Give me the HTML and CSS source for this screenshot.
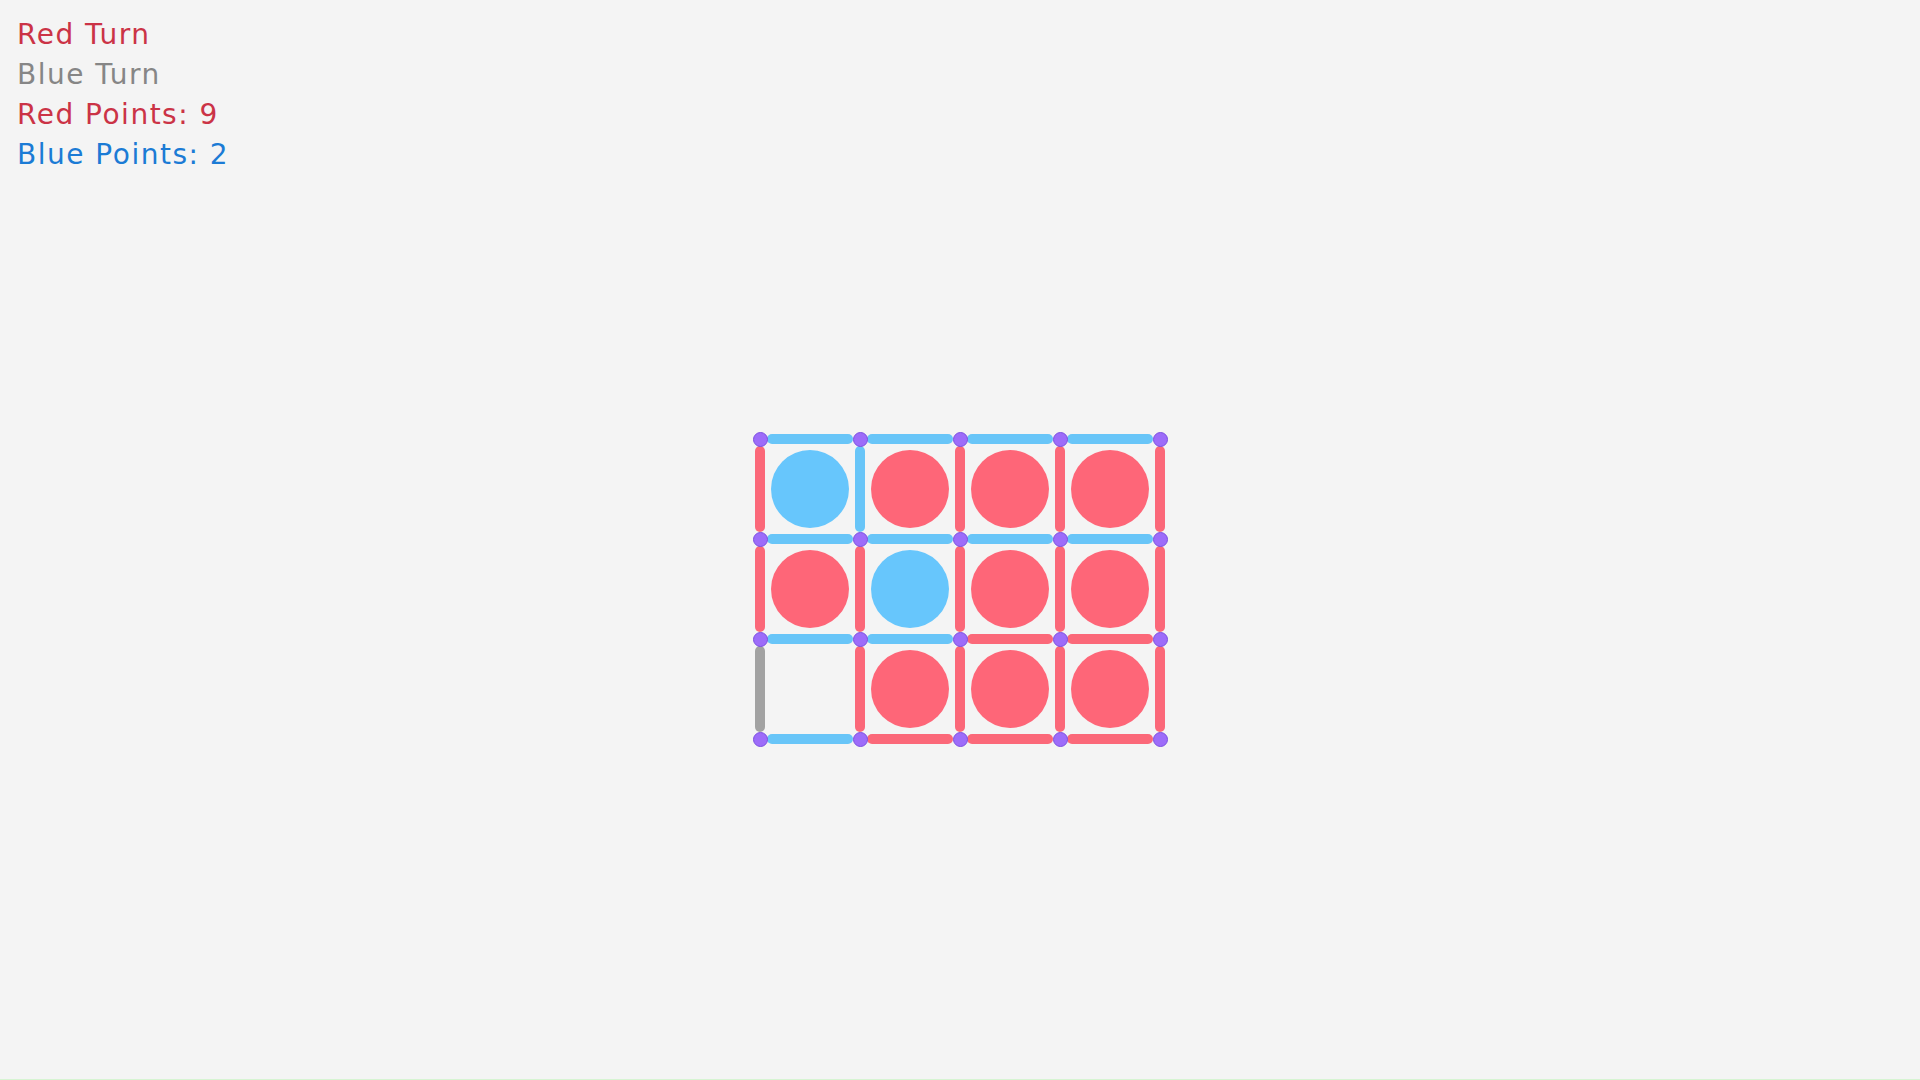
FILE: index.html
```html
<!DOCTYPE html>
<html lang="en">
<head>
    <meta charset="UTF-8">
    <meta name="viewport" content="width=device-width, initial-scale=1.0">
    <title>Dots and Boxes</title>
    <link rel="stylesheet" href="styles.css">
</head>
<body>
    <div class="page">
        <!-- Marcador -->
        <div class="hud">
            <div class="hud-line red-text">Red Turn</div>
            <div class="hud-line idle-text">Blue Turn</div>
            <div class="hud-line red-text">Red Points: 9</div>
            <div class="hud-line blue-text">Blue Points: 2</div>
        </div>

        <!-- Tablero -->
        <div class="stage">
            <div class="board">
                <!-- fila de puntos 0 -->
                <span class="dot"></span><span class="hline blue"></span><span class="dot"></span><span class="hline blue"></span><span class="dot"></span><span class="hline blue"></span><span class="dot"></span><span class="hline blue"></span><span class="dot"></span>
                <!-- fila de cajas 0 -->
                <span class="vline red"></span><span class="box"><i class="coin blue"></i></span><span class="vline blue"></span><span class="box"><i class="coin red"></i></span><span class="vline red"></span><span class="box"><i class="coin red"></i></span><span class="vline red"></span><span class="box"><i class="coin red"></i></span><span class="vline red"></span>
                <!-- fila de puntos 1 -->
                <span class="dot"></span><span class="hline blue"></span><span class="dot"></span><span class="hline blue"></span><span class="dot"></span><span class="hline blue"></span><span class="dot"></span><span class="hline blue"></span><span class="dot"></span>
                <!-- fila de cajas 1 -->
                <span class="vline red"></span><span class="box"><i class="coin red"></i></span><span class="vline red"></span><span class="box"><i class="coin blue"></i></span><span class="vline red"></span><span class="box"><i class="coin red"></i></span><span class="vline red"></span><span class="box"><i class="coin red"></i></span><span class="vline red"></span>
                <!-- fila de puntos 2 -->
                <span class="dot"></span><span class="hline blue"></span><span class="dot"></span><span class="hline blue"></span><span class="dot"></span><span class="hline red"></span><span class="dot"></span><span class="hline red"></span><span class="dot"></span>
                <!-- fila de cajas 2 -->
                <span class="vline empty"></span><span class="box"></span><span class="vline red"></span><span class="box"><i class="coin red"></i></span><span class="vline red"></span><span class="box"><i class="coin red"></i></span><span class="vline red"></span><span class="box"><i class="coin red"></i></span><span class="vline red"></span>
                <!-- fila de puntos 3 -->
                <span class="dot"></span><span class="hline blue"></span><span class="dot"></span><span class="hline red"></span><span class="dot"></span><span class="hline red"></span><span class="dot"></span><span class="hline red"></span><span class="dot"></span>
            </div>
        </div>
    </div>
</body>
</html>
```

FILE: styles.css
```css
body {
    margin: 0;
    padding: 0;
    background-color: #f4f4f4;
    font-family: "DejaVu Sans", Verdana, sans-serif;
}
.page {
    min-height: 100vh;
    box-sizing: border-box;
    border-bottom: 1px solid #d6f4d2;
    display: flex;
    flex-direction: column;
}
.hud {
    padding: 15px 0 0 17px;
}
.hud-line {
    font-size: 28px;
    line-height: 40px;
    letter-spacing: 1.5px;
}
.red-text {
    color: #cb3346;
}
.idle-text {
    color: #868686;
}
.blue-text {
    color: #1b7bd5;
}
.stage {
    display: flex;
    justify-content: center;
    padding-top: 257px;
}
.board {
    display: grid;
    grid-template-columns: 14px 86px 14px 86px 14px 86px 14px 86px 14px;
    grid-template-rows: 14px 86px 14px 86px 14px 86px 14px;
}
.dot {
    width: 15px;
    height: 15px;
    box-sizing: border-box;
    border-radius: 50%;
    background-color: #9d6cf9;
    border: 1.5px solid #7c4fe2;
    align-self: center;
    justify-self: center;
    position: relative;
    z-index: 1;
}
.hline {
    height: 10px;
    border-radius: 5px;
    align-self: center;
}
.vline {
    width: 10px;
    border-radius: 5px;
    justify-self: center;
}
.hline.blue, .vline.blue {
    background-color: #68c5f8;
}
.hline.red, .vline.red {
    background-color: #fb6879;
}
.vline.empty {
    background-color: #a2a2a2;
}
.box {
    display: flex;
    align-items: center;
    justify-content: center;
}
.coin {
    width: 78px;
    height: 78px;
    border-radius: 50%;
}
.coin.blue {
    background-color: #67c6fc;
}
.coin.red {
    background-color: #fe6678;
}
```
